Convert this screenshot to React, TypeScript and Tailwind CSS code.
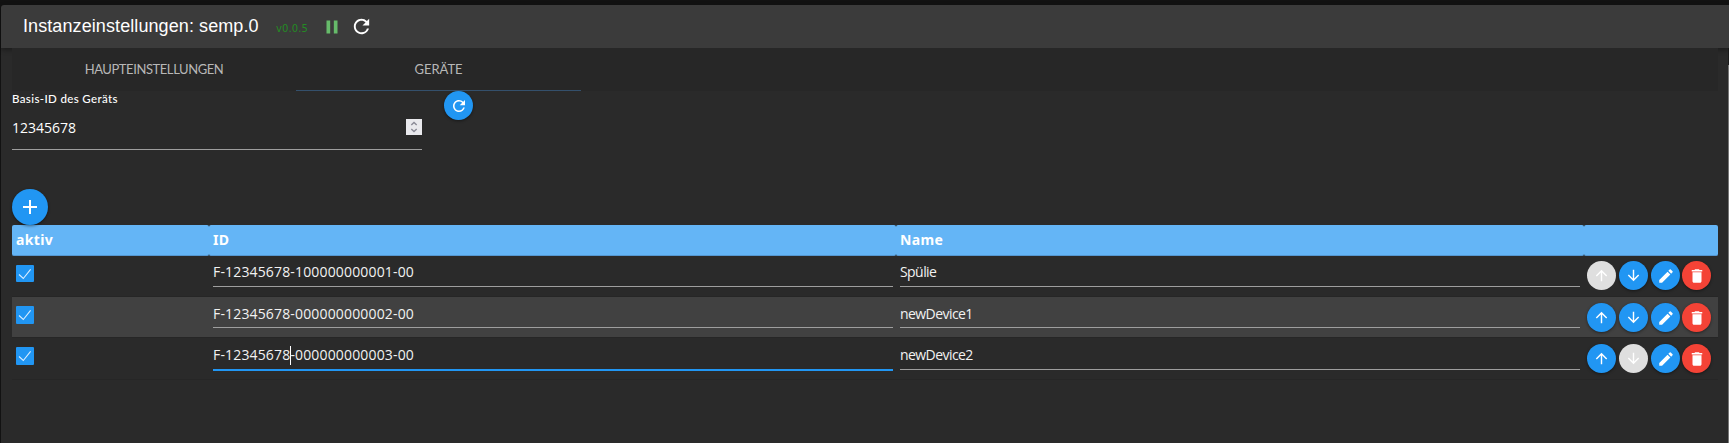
import type { ReactNode } from "react";
import { MdAdd, MdArrowDownward, MdArrowUpward, MdDelete, MdEdit, MdPause, MdRefresh } from "react-icons/md";

type Device = { id: string; name: string; caret?: number };

const devices: Device[] = [
  { id: "F-12345678-100000000001-00", name: "Spülie" },
  { id: "F-12345678-000000000002-00", name: "newDevice1" },
  { id: "F-12345678-000000000003-00", name: "newDevice2", caret: 10 },
];

const rowStyles = [
  { row: "h-[41px]", check: "mt-[9px] h-[17px]", field: "h-[31px] pt-[6px]", buttons: "mt-[5px]" },
  { row: "h-[41px] bg-[#414141]", check: "mt-[9px] h-[18px]", field: "h-[31px] pt-[7px]", buttons: "mt-[6px]" },
  { row: "h-[42px]", check: "mt-[9px] h-[18px]", field: "h-[32px] pt-[7px]", buttons: "mt-[6px]" },
];

function RoundButton({ tone = "blue", label, children }: { tone?: "blue" | "red" | "off"; label: string; children: ReactNode }) {
  const tones = {
    blue: "bg-[#2196f3] text-white shadow-[0_1px_3px_rgba(0,0,0,0.45)]",
    red: "bg-[#f44336] text-white shadow-[0_1px_3px_rgba(0,0,0,0.45)]",
    off: "bg-[#dfdfdf] text-white",
  };
  return (
    <button aria-label={label} className={`flex size-[29px] shrink-0 items-center justify-center rounded-full ${tones[tone]}`}>
      {children}
    </button>
  );
}

function DeviceRow({ device, index }: { device: Device; index: number }) {
  const s = rowStyles[index];
  const focused = device.caret !== undefined;
  return (
    <div className={`flex items-start border-b border-[#262626] ${s.row}`}>
      <div className="w-[201px] shrink-0 pl-1">
        <div className={`flex w-[18px] items-center justify-center rounded-[1px] bg-[#2196f3] ${s.check}`}>
          <svg viewBox="0 0 18 18" className="size-[18px]" fill="none" stroke="#d8edff" strokeWidth="1.1">
            <path d="M3 9.5 L7.3 13.5 L14.6 4.3" />
          </svg>
        </div>
      </div>
      <div
        className={`w-[680px] shrink-0 whitespace-pre text-[14px] leading-[20px] tracking-[0.16px] text-[#f2f2f2] ${s.field} ${
          focused ? "h-[33px]! border-b-2 border-[#2196f3]" : "border-b border-[#9e9e9e]"
        }`}
      >
        {focused ? (
          <>
            {device.id.slice(0, device.caret)}
            <span className="-mr-px inline-block h-[19px] w-px bg-white align-[-5px]" />
            {device.id.slice(device.caret)}
          </>
        ) : (
          device.id
        )}
      </div>
      <div className={`ml-[7px] w-[680px] shrink-0 border-b border-[#9e9e9e] text-[14px] leading-[20px] tracking-[-0.56px] text-[#f2f2f2] ${s.field}`}>
        {device.name}
      </div>
      <div className={`ml-[7px] flex gap-[3px] ${s.buttons}`}>
        <RoundButton label="up" tone={index === 0 ? "off" : "blue"}>
          <MdArrowUpward size={17} />
        </RoundButton>
        <RoundButton label="down" tone={index === 2 ? "off" : "blue"}>
          <MdArrowDownward size={17} />
        </RoundButton>
        <RoundButton label="edit">
          <MdEdit size={18} />
        </RoundButton>
        <div className="-ml-px">
          <RoundButton label="delete" tone="red">
            <MdDelete size={18} />
          </RoundButton>
        </div>
      </div>
    </div>
  );
}

const headCell = "flex items-center rounded-[2px] border-b border-[#5597d1] bg-[#64b5f6] pb-[2px] pl-1";

export default function App() {
  return (
    <div className="flex h-[443px] w-[1729px] flex-col overflow-hidden bg-[#121212] pt-[5px] pl-px font-['Open_Sans','Noto_Sans',sans-serif] text-white">
      <header className="z-10 flex h-[43px] shrink-0 items-center rounded-tl-[3px] bg-[#3b3b3b] pl-[22px] shadow-[0_2px_5px_rgba(0,0,0,0.35)]">
        <h1 className="w-[253px] whitespace-nowrap pb-[1px] font-['Liberation_Sans',sans-serif] text-[18px] leading-6 tracking-[0.09px]">
          Instanzeinstellungen: semp.0
        </h1>
        <span className="w-[45px] pt-[4px] font-['DejaVu_Sans',sans-serif] text-[10px] tracking-[0.1px] text-[#248a24]">v0.0.5</span>
        <MdPause size={22} className="text-[#66bb6a]" />
        <MdRefresh size={23} className="ml-[7px]" />
      </header>
      <div className="flex grow">
        <main className="flex w-[1727px] flex-col bg-[#2a2a2a] px-[11px]">
          <nav className="z-20 flex h-[43px] w-[1706px] shrink-0 bg-[#272727] pt-px font-['Lato',sans-serif] text-[13px] text-[#b7b7b7]">
            <div className="flex w-[284px] items-center justify-center tracking-[-0.42px]">HAUPTEINSTELLUNGEN</div>
            <div className="flex w-[285px] items-center justify-center border-b border-[#34506c] pt-px">GERÄTE</div>
          </nav>
          <section className="flex h-[98px] shrink-0">
            <div className="flex h-[59px] w-[410px] flex-col border-b border-[#9e9e9e]">
              <label className="h-[16px] font-['Lato',sans-serif] text-[11.5px] leading-[16px] font-medium tracking-[0.37px]">
                Basis-ID des Geräts
              </label>
              <div className="flex justify-between pt-[11px]">
                <span className="text-[14px] leading-[20px]">12345678</span>
                <span className="mt-px flex size-4 items-center justify-center bg-[#e9e9ed]">
                  <svg viewBox="0 0 16 16" className="size-4" fill="none" stroke="#8a8a96" strokeWidth="1.4">
                    <path d="M5.3 6 L8 3.5 L10.7 6 M5.3 10 L8 12.5 L10.7 10" />
                  </svg>
                </span>
              </div>
            </div>
            <div className="ml-[22px]">
              <RoundButton label="refresh">
                <MdRefresh size={18} />
              </RoundButton>
            </div>
          </section>
          <button aria-label="add" className="z-10 flex size-9 shrink-0 items-center justify-center rounded-full bg-[#2196f3] shadow-[0_1px_3px_rgba(0,0,0,0.45)]">
            <MdAdd size={24} />
          </button>
          <section className="w-[1706px]">
            <div className="flex h-[31px] font-['Noto_Sans',sans-serif] text-[14px] font-bold tracking-[0.35px]">
              <div className={`w-[197px] ${headCell}`}>aktiv</div>
              <div className={`w-[687px] ${headCell}`}>ID</div>
              <div className={`w-[688px] ${headCell}`}>Name</div>
              <div className={`grow ${headCell}`} />
            </div>
            {devices.map((device, index) => (
              <DeviceRow key={device.id} device={device} index={index} />
            ))}
          </section>
        </main>
        <div className="w-px bg-[#1c1c1c] pt-[17px]">
          <div className="h-full bg-[#777777]" />
        </div>
      </div>
    </div>
  );
}
